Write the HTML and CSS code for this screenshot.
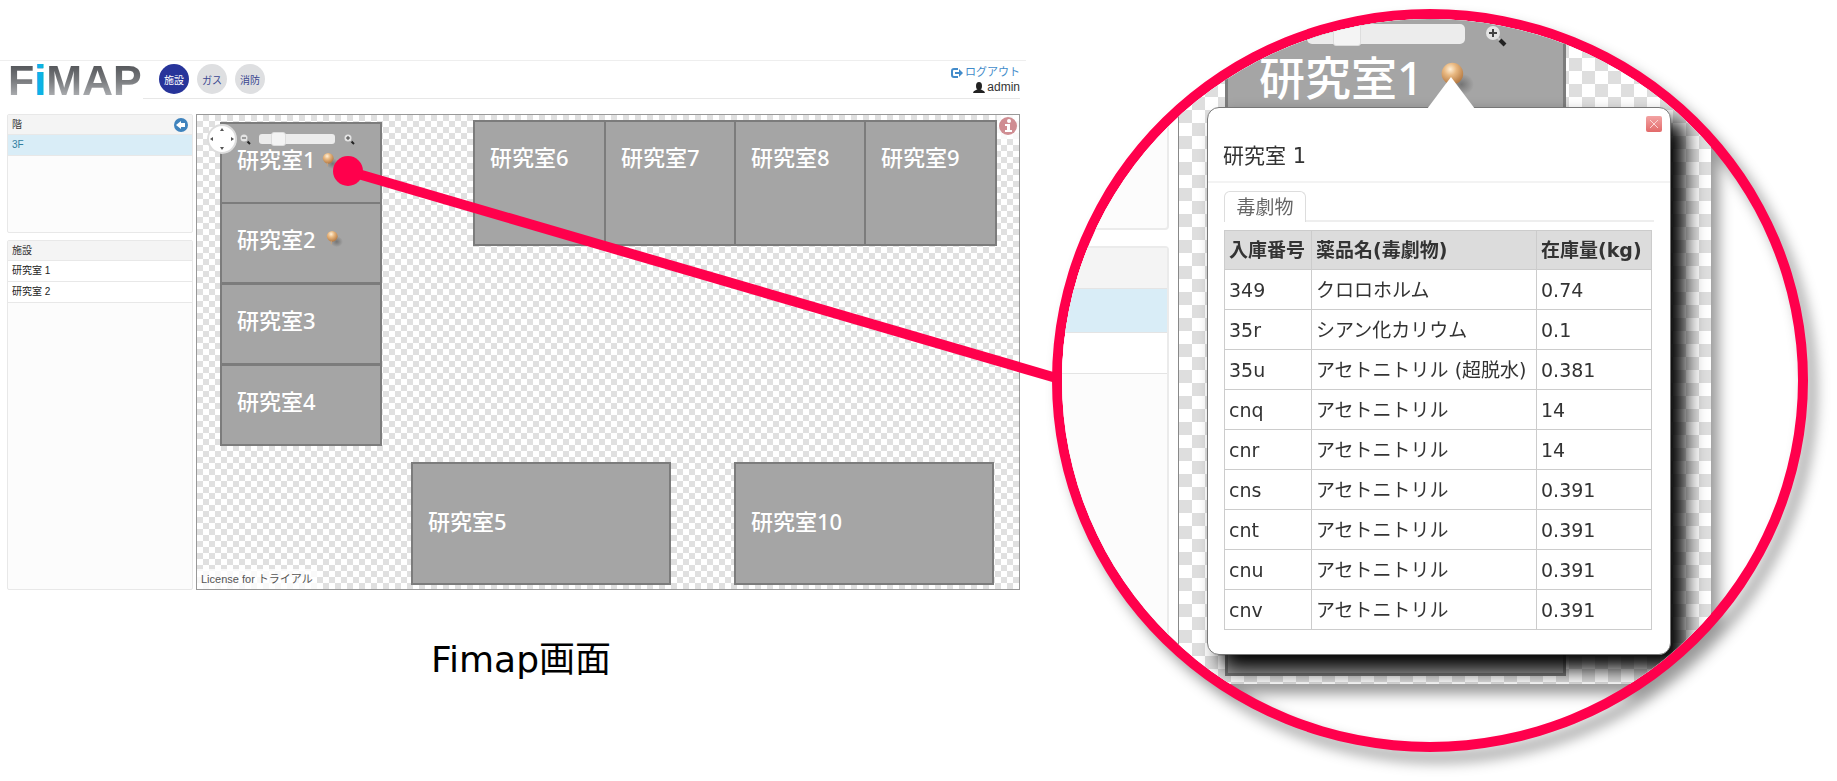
FILE: index.html
```html
<!DOCTYPE html>
<html lang="ja">
<head>
    <meta charset="UTF-8">
    <meta name="viewport" content="width=device-width, initial-scale=1.0">
    <title>Fimap画面</title>
    <link rel="stylesheet" href="styles.css">
</head>
<body>
    <svg class="defs" width="0" height="0" aria-hidden="true">
        <defs>
            <radialGradient id="ball" cx="40%" cy="30%" r="70%">
                <stop offset="0" stop-color="#fff0d8"/>
                <stop offset="0.4" stop-color="#e9b982"/>
                <stop offset="1" stop-color="#b57a43"/>
            </radialGradient>
            <radialGradient id="shade">
                <stop offset="0" stop-color="#555" stop-opacity="0.6"/>
                <stop offset="1" stop-color="#555" stop-opacity="0"/>
            </radialGradient>
            <symbol id="pin" viewBox="0 0 20 20">
                <ellipse cx="13" cy="13" rx="7" ry="6" fill="url(#shade)"/>
                <circle cx="8" cy="7" r="6" fill="url(#ball)"/>
                <path d="M7 12v4" stroke="#c9a27a" stroke-width="1"/>
            </symbol>
            <symbol id="zoom-in" viewBox="0 0 22 22">
                <path d="M11 11l4 4" stroke="#ccc" stroke-width="2"/>
                <path d="M15 15l5 5" stroke="#222" stroke-width="4"/>
                <circle cx="8" cy="8" r="7" fill="#e4e4e4"/>
                <path d="M4 8h8M8 4v8" stroke="#444" stroke-width="2"/>
            </symbol>
            <symbol id="zoom-out" viewBox="0 0 22 22">
                <path d="M11 11l4 4" stroke="#ccc" stroke-width="2"/>
                <path d="M15 15l5 5" stroke="#222" stroke-width="4"/>
                <circle cx="8" cy="8" r="7" fill="#e4e4e4"/>
                <path d="M4 8h8" stroke="#555" stroke-width="2"/>
            </symbol>
        </defs>
    </svg>

    <div class="scene">
        <figure class="screen">
            <div class="app">
                <header class="header">
                    <h1 class="logo">F<span>i</span>MAP</h1>
                    <div class="header-bar">
                        <nav class="tabs">
                            <button type="button" class="active">施設</button>
                            <button type="button">ガス</button>
                            <button type="button">消防</button>
                        </nav>
                        <div class="user">
                            <a href="#logout">
                                <svg width="12" height="12" viewBox="0 0 12 12"><path d="M7 2H3Q1 2 1 4v4q0 2 2 2h4" fill="none" stroke="#428bca" stroke-width="2"/><path d="M4 5h4V2l4 4-4 4V7H4z" fill="#428bca"/></svg>
                                ログアウト
                            </a>
                            <span>
                                <svg width="12" height="12" viewBox="0 0 12 12"><ellipse cx="6" cy="4" rx="3" ry="4" fill="#222"/><path d="M0 11q0-2 3-3l2-1h2l2 1q3 1 3 3z" fill="#222"/></svg>
                                admin
                            </span>
                        </div>
                    </div>
                </header>
                <main class="main">
                    <aside class="sidebar">
                        <section class="panel floors">
                            <h2>階
                                <button type="button" class="back" aria-label="戻る">
                                    <svg width="14" height="14" viewBox="0 0 14 14"><circle cx="7" cy="7" r="7" fill="#3f83bd"/><path d="M2 7l5-4v2h4v4H7v2z" fill="#fff"/></svg>
                                </button>
                            </h2>
                            <ul>
                                <li class="selected"><a href="#3f">3F</a></li>
                            </ul>
                        </section>
                        <section class="panel places">
                            <h2>施設</h2>
                            <ul>
                                <li><a href="#room1">研究室 1</a></li>
                                <li><a href="#room2">研究室 2</a></li>
                            </ul>
                        </section>
                    </aside>
                    <div class="map">
                        <div class="room r1">研究室1</div>
                        <div class="room r2">研究室2</div>
                        <div class="room r3">研究室3</div>
                        <div class="room r4">研究室4</div>
                        <div class="room r6">研究室6</div>
                        <div class="room r7">研究室7</div>
                        <div class="room r8">研究室8</div>
                        <div class="room r9">研究室9</div>
                        <div class="room big r5">研究室5</div>
                        <div class="room big r10">研究室10</div>
                        <svg class="pin p1" width="18" height="18"><use href="#pin"/></svg>
                        <svg class="pin p2" width="18" height="18"><use href="#pin"/></svg>
                        <div class="controls">
                            <svg width="30" height="30" viewBox="0 0 30 30"><circle cx="15" cy="15" r="14" fill="#fff" stroke="#ddd" stroke-width="2"/><path d="M15 4l2 3h-4zM15 26l2-3h-4zM3 15l3-2v4zM27 15l-3-2v4z" fill="#555"/></svg>
                            <svg width="11" height="11"><use href="#zoom-out"/></svg>
                            <input type="range" min="0" max="100" value="20" aria-label="ズーム">
                            <svg width="11" height="11"><use href="#zoom-in"/></svg>
                        </div>
                        <button type="button" class="info" aria-label="情報">
                            <svg width="20" height="20" viewBox="0 0 20 20"><circle cx="10" cy="10" r="9" fill="#cf8d92"/><circle cx="11" cy="5" r="2" fill="#fff"/><path d="M7 8h5v6h2v2H7v-2h2v-4H7z" fill="#fff"/></svg>
                        </button>
                        <div class="license">License for トライアル</div>
                    </div>
                </main>
            </div>
            <figcaption>Fimap画面</figcaption>
        </figure>

        <div class="lens">
            <div class="lens-view">
                <div class="lens-side">
                    <div class="lens-panel first"></div>
                    <div class="lens-panel second">
                        <div class="bar"></div>
                        <div class="bar on"></div>
                        <div class="bar plain"></div>
                    </div>
                </div>
                <div class="lens-map">
                    <div class="lens-room">研究室1</div>
                    <input type="range" min="0" max="100" value="20" aria-label="ズーム (拡大)">
                    <svg class="lens-zoom" width="22" height="22"><use href="#zoom-in"/></svg>
                    <svg class="lens-pin" width="36" height="36"><use href="#pin"/></svg>
                    <div class="popup">
                        <button type="button" class="close" aria-label="閉じる">
                            <svg width="10" height="10" viewBox="0 0 10 10"><path d="M1 1l8 8M9 1L1 9" stroke="#fbd5d5" stroke-width="1"/></svg>
                        </button>
                        <h3>研究室 1</h3>
                        <div class="popup-body">
                            <div class="popup-tabs"><button type="button">毒劇物</button></div>
                            <table>
                                <thead>
                                    <tr><th>入庫番号</th><th>薬品名(毒劇物)</th><th>在庫量(kg)</th></tr>
                                </thead>
                                <tbody>
                                    <tr><td>349</td><td>クロロホルム</td><td>0.74</td></tr>
                                    <tr><td>35r</td><td>シアン化カリウム</td><td>0.1</td></tr>
                                    <tr><td>35u</td><td>アセトニトリル (超脱水)</td><td>0.381</td></tr>
                                    <tr><td>cnq</td><td>アセトニトリル</td><td>14</td></tr>
                                    <tr><td>cnr</td><td>アセトニトリル</td><td>14</td></tr>
                                    <tr><td>cns</td><td>アセトニトリル</td><td>0.391</td></tr>
                                    <tr><td>cnt</td><td>アセトニトリル</td><td>0.391</td></tr>
                                    <tr><td>cnu</td><td>アセトニトリル</td><td>0.391</td></tr>
                                    <tr><td>cnv</td><td>アセトニトリル</td><td>0.391</td></tr>
                                </tbody>
                            </table>
                        </div>
                    </div>
                </div>
            </div>
        </div>

        <!-- 研究室1から拡大図への線 -->
        <svg class="connector" width="100%" height="100%">
            <line x1="348" y1="171" x2="57.5%" y2="378" stroke="#ff004c" stroke-width="10"/>
            <circle cx="348" cy="171" r="15" fill="#ff004c"/>
        </svg>
    </div>
</body>
</html>
```
FILE: styles.css
```css
* {
    margin: 0;
    padding: 0;
    box-sizing: border-box;
}
body {
    background: #fff;
    font-family: "Liberation Sans", "Noto Sans CJK JP", sans-serif;
    color: #333;
}
button {
    border: none;
    background: none;
    font-family: inherit;
    cursor: pointer;
}
a {
    color: inherit;
    text-decoration: none;
}
ul {
    list-style: none;
}
svg {
    display: block;
    flex: none;
}
.defs {
    position: absolute;
}
.scene {
    position: relative;
    display: flex;
    align-items: flex-start;
    gap: 26px;
    padding: 9px 29px 29px 0;
}
.screen {
    flex: 1;
    padding-top: 51px;
}
figcaption {
    margin-top: 43px;
    padding-left: 16px;
    text-align: center;
    font-family: "DejaVu Sans", "Noto Sans CJK JP", sans-serif;
    font-size: 36px;
    line-height: 54px;
    color: #000;
}

/* アプリ画面 */
.app {
    border-top: 1px solid #eee;
}
.header {
    display: flex;
    height: 38px;
    margin-right: 6px;
    padding-left: 8px;
}
.logo {
    width: 135px;
    font-size: 43px;
    line-height: 39px;
    background: linear-gradient(#54565a 10%, #77797c 50%, #a9abae 90%);
    -webkit-background-clip: text;
    background-clip: text;
    color: transparent;
}
.logo span {
    color: #0db2e8;
}
.header-bar {
    display: flex;
    flex: 1;
    justify-content: space-between;
    border-bottom: 1px solid #e7e7e7;
}
.tabs {
    display: flex;
    gap: 8px;
    padding: 3px 0 0 16px;
}
.tabs button {
    width: 30px;
    height: 30px;
    border-radius: 50%;
    background: #dedfe1;
    color: #3a4690;
    font-size: 10px;
    white-space: nowrap;
}
.tabs .active {
    background: #27349a;
    color: #fff;
}
.user {
    display: flex;
    flex-direction: column;
    align-items: flex-end;
    padding-top: 4px;
    font-size: 12px;
    line-height: 15px;
}
.user a, .user span {
    display: flex;
    align-items: center;
    gap: 2px;
}
.user a {
    color: #428bca;
    font-size: 11px;
}
.main {
    display: flex;
    gap: 3px;
    margin: 15px 6px 0 7px;
    height: 476px;
}
.sidebar {
    display: flex;
    flex-direction: column;
    gap: 7px;
    width: 186px;
}
.panel {
    border: 1px solid #e8e8e8;
    border-radius: 2px;
    background: #fcfcfc;
    font-size: 10px;
    line-height: 20px;
}
.panel h2 {
    display: flex;
    justify-content: space-between;
    align-items: center;
    height: 20px;
    padding: 0 4px;
    background: #f4f4f4;
    border-bottom: 1px solid #e8e8e8;
    font-size: 10px;
    font-weight: normal;
}
.panel li {
    height: 21px;
    padding: 0 4px;
    border-bottom: 1px solid #e8e8e8;
    background: #fff;
    color: #222;
}
.panel .selected {
    background: #d9edf7;
    color: #31809f;
}
.floors {
    height: 119px;
}
.places {
    flex: 1;
}
.map {
    position: relative;
    flex: 1;
    border: 1px solid #999;
    background: repeating-conic-gradient(#e0e0e0 0 25%, #fff 0 50%) 0 0 / 12px 12px;
}
.room {
    position: absolute;
    width: 162px;
    height: 82px;
    padding: 20px 15px;
    border: 2px solid #7c7c7c;
    background: #a5a5a5;
    color: #fff;
    font-family: "Noto Sans", "Noto Sans CJK JP", sans-serif;
    font-size: 22px;
    font-weight: 500;
    line-height: 30px;
    white-space: nowrap;
}
.r1, .r2, .r3, .r4 {
    left: 23px;
}
.r1 { top: 7px; }
.r2 { top: 87px; }
.r3 { top: 168px; }
.r4 { top: 249px; }
.r6, .r7, .r8, .r9 {
    top: 5px;
    width: 133px;
    height: 126px;
}
.r6 { left: 276px; }
.r7 { left: 407px; }
.r8 { left: 537px; }
.r9 { left: 667px; }
.room.big {
    top: 347px;
    width: 260px;
    height: 123px;
    padding-top: 42px;
}
.r5 { left: 214px; }
.r10 { left: 537px; }
.pin {
    position: absolute;
}
.p1 {
    left: 124px;
    top: 37px;
}
.p2 {
    left: 128px;
    top: 115px;
}
.controls {
    position: absolute;
    left: 10px;
    top: 9px;
    display: flex;
    align-items: center;
}
.controls svg + svg {
    margin: 0 8px 0 3px;
}
.controls input {
    width: 76px;
    height: 14px;
    margin-right: 9px;
}
input[type="range"] {
    -webkit-appearance: none;
    appearance: none;
    background: none;
}
input[type="range"]::-webkit-slider-runnable-track {
    height: 10px;
    border-radius: 3px;
    background: #ececec;
}
input[type="range"]::-webkit-slider-thumb {
    -webkit-appearance: none;
    width: 15px;
    height: 14px;
    margin-top: -2px;
    border: 1px solid #ddd;
    border-radius: 3px;
    background: #f4f4f4;
}
.info {
    position: absolute;
    right: 0;
    top: 0;
    padding: 1px 1px 3px;
    background: rgba(255, 255, 255, 0.8);
}
.license {
    position: absolute;
    left: 0;
    bottom: 0;
    padding: 0 4px;
    background: rgba(255, 255, 255, 0.8);
    color: #555;
    font-size: 11px;
    line-height: 20px;
}

/* 拡大図 */
.lens {
    flex: none;
    width: 756px;
    height: 743px;
    border: 10px solid #ff004c;
    border-radius: 50%;
    overflow: hidden;
    filter: drop-shadow(8px 10px 7px rgba(0, 0, 0, 0.4));
}
.lens-view {
    display: flex;
    gap: 9px;
    width: 649px;
    height: 665px;
    background: #fff;
}
.lens-side {
    display: flex;
    flex-direction: column;
    gap: 16px;
    width: 107px;
}
.lens-panel {
    border: 2px solid #ebebeb;
    border-left: none;
    border-radius: 0 4px 4px 0;
    background: #fcfcfc;
}
.lens-panel.first {
    height: 211px;
}
.lens-panel.second {
    flex: 1;
    border-bottom: none;
}
.bar {
    height: 41px;
    background: #f4f4f4;
    border-bottom: 1px solid #e4e4e4;
}
.bar.on {
    height: 44px;
    background: #d9edf7;
}
.bar.plain {
    background: #fff;
}
.lens-map {
    position: relative;
    flex: 1;
    overflow: hidden;
    border-left: 1px solid #888;
    background: repeating-conic-gradient(#dedede 0 25%, #fff 0 50%) 0 0 / 26px 26px;
}
.lens-room {
    position: absolute;
    left: 46px;
    top: 0;
    width: 341px;
    height: 657px;
    padding: 28px 31px;
    border: 3px solid #7c7c7c;
    border-top: none;
    background: #a5a5a5;
    color: #fff;
    font-family: "Noto Sans", "Noto Sans CJK JP", sans-serif;
    font-size: 46px;
    font-weight: 500;
    line-height: 60px;
}
.lens-map input {
    position: absolute;
    left: 128px;
    top: 3px;
    width: 158px;
    height: 24px;
}
.lens-map input::-webkit-slider-runnable-track {
    height: 20px;
    border-radius: 5px;
}
.lens-map input::-webkit-slider-thumb {
    width: 28px;
    height: 24px;
}
.lens-zoom {
    position: absolute;
    left: 306px;
    top: 6px;
}
.lens-pin {
    position: absolute;
    left: 259px;
    top: 42px;
}
.popup {
    position: absolute;
    left: 28px;
    top: 88px;
    width: 464px;
    border: 1px solid #777;
    border-radius: 12px;
    background: #fff;
    box-shadow: 14px 14px 20px #000;
    font-family: "DejaVu Sans", "Noto Sans CJK JP", sans-serif;
    padding-bottom: 24px;
}
.popup::before {
    content: "";
    position: absolute;
    left: 219px;
    top: -31px;
    border: 24px solid transparent;
    border-top: none;
    border-bottom: 32px solid #fff;
}
.popup h3 {
    padding: 32px 15px 8px;
    border-bottom: 2px solid #f3f3f3;
    font-size: 21px;
    line-height: 33px;
    font-weight: normal;
}
.close {
    position: absolute;
    right: 8px;
    top: 8px;
    display: flex;
    align-items: center;
    justify-content: center;
    width: 16px;
    height: 16px;
    border-radius: 2px;
    background: linear-gradient(#f3a3a3, #e26a6a);
}
.popup-body {
    padding: 8px 16px 0;
}
.popup-tabs {
    display: flex;
    border-bottom: 2px solid #eee;
}
.popup-tabs button {
    width: 82px;
    height: 31px;
    margin-bottom: -2px;
    border: 1px solid #ddd;
    border-bottom: none;
    border-radius: 6px 6px 0 0;
    background: #fff;
    color: #666;
    font-size: 19px;
    line-height: 24px;
    white-space: nowrap;
}
table {
    width: 428px;
    margin-top: 8px;
    border-collapse: collapse;
    table-layout: fixed;
    font-size: 19px;
    line-height: 24px;
}
th, td {
    height: 40px;
    padding: 0 4px;
    border: 1px solid #ccc;
    text-align: left;
    white-space: nowrap;
}
th {
    height: 39px;
    background: #dcdcdc;
}
th:first-child {
    width: 87px;
}
th:last-child {
    width: 115px;
}
.connector {
    position: absolute;
    left: 0;
    top: 0;
    pointer-events: none;
}
```
